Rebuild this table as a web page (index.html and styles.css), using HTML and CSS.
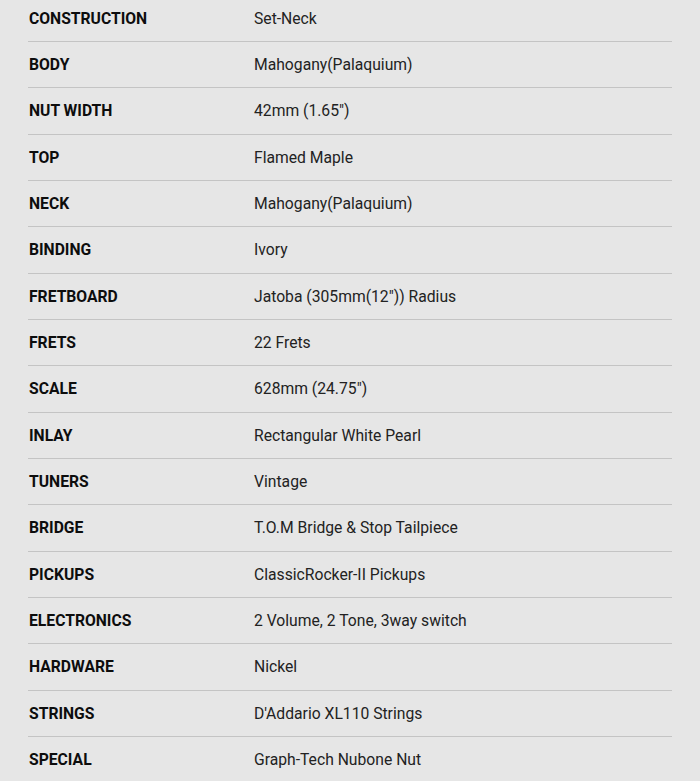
FILE: index.html
```html
<!DOCTYPE html>
<html>
<head>
<meta charset="utf-8">
<link rel="stylesheet" href="styles.css">
</head>
<body>
<div class="specs">
  <div class="row"><div class="label">CONSTRUCTION</div><div class="value">Set-Neck</div></div>
  <div class="row"><div class="label">BODY</div><div class="value">Mahogany(Palaquium)</div></div>
  <div class="row"><div class="label">NUT WIDTH</div><div class="value">42mm (1.65")</div></div>
  <div class="row"><div class="label">TOP</div><div class="value">Flamed Maple</div></div>
  <div class="row"><div class="label">NECK</div><div class="value">Mahogany(Palaquium)</div></div>
  <div class="row"><div class="label">BINDING</div><div class="value">Ivory</div></div>
  <div class="row"><div class="label">FRETBOARD</div><div class="value">Jatoba (305mm(12")) Radius</div></div>
  <div class="row"><div class="label">FRETS</div><div class="value">22 Frets</div></div>
  <div class="row"><div class="label">SCALE</div><div class="value">628mm (24.75")</div></div>
  <div class="row"><div class="label">INLAY</div><div class="value">Rectangular White Pearl</div></div>
  <div class="row"><div class="label">TUNERS</div><div class="value">Vintage</div></div>
  <div class="row"><div class="label">BRIDGE</div><div class="value">T.O.M Bridge &amp; Stop Tailpiece</div></div>
  <div class="row"><div class="label">PICKUPS</div><div class="value">ClassicRocker-II Pickups</div></div>
  <div class="row"><div class="label">ELECTRONICS</div><div class="value">2 Volume, 2 Tone, 3way switch</div></div>
  <div class="row"><div class="label">HARDWARE</div><div class="value">Nickel</div></div>
  <div class="row"><div class="label">STRINGS</div><div class="value">D'Addario XL110 Strings</div></div>
  <div class="row"><div class="label">SPECIAL</div><div class="value">Graph-Tech Nubone Nut</div></div>
</div>
</body>
</html>
```
FILE: styles.css
```css
html, body {
  margin: 0;
  padding: 0;
  background: #e6e6e6;
  overflow: hidden;
}
body {
  font-family: Roboto, "Liberation Sans", sans-serif;
  font-size: 15.7px;
}
.specs {
  margin: -4.33px 0 0 28px;
  width: 644px;
}
.row {
  display: grid;
  grid-template-columns: 226px 1fr;
  padding: 12px 0;
  line-height: 21.33px;
  border-bottom: 1px solid #c4c4c4;
}
.label {
  padding-left: 1px;
  font-weight: 700;
  color: #0d0d0d;
}
.value {
  color: #222;
}
```
